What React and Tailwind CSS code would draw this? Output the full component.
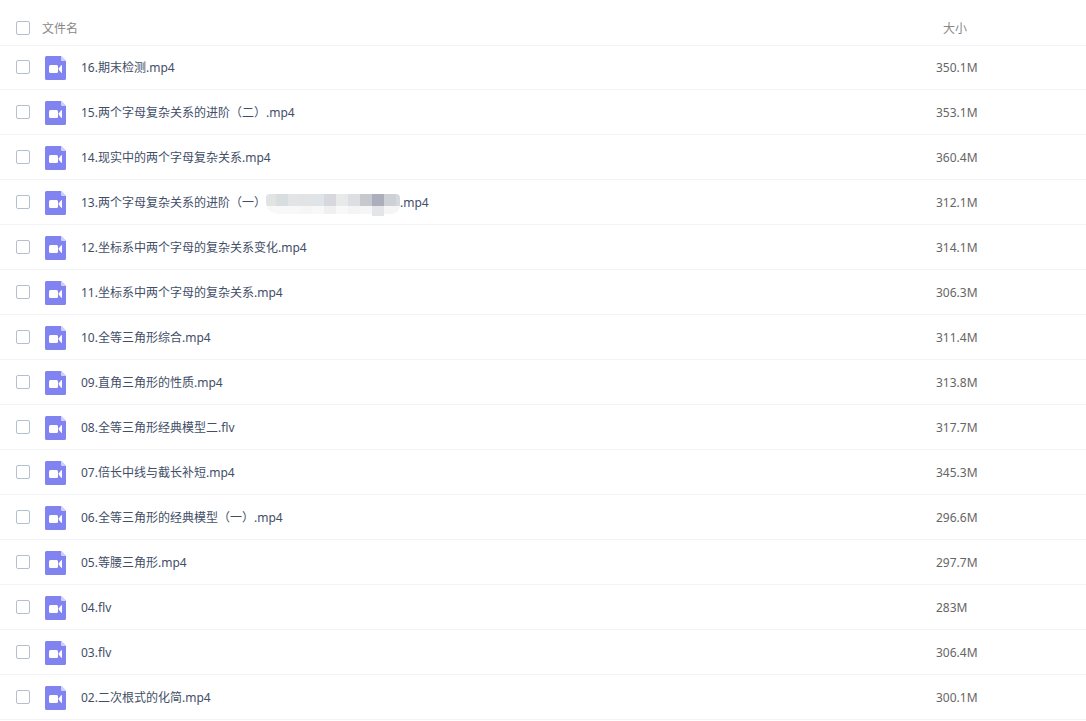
import { useState } from "react";

const FILES = [
  { id: 16, name: "16.期末检测.mp4", size: "350.1M" },
  { id: 15, name: "15.两个字母复杂关系的进阶（二）.mp4", size: "353.1M" },
  { id: 14, name: "14.现实中的两个字母复杂关系.mp4", size: "360.4M" },
  { id: 13, name: "13.两个字母复杂关系的进阶（一）", masked: true, ext: ".mp4", size: "312.1M" },
  { id: 12, name: "12.坐标系中两个字母的复杂关系变化.mp4", size: "314.1M" },
  { id: 11, name: "11.坐标系中两个字母的复杂关系.mp4", size: "306.3M" },
  { id: 10, name: "10.全等三角形综合.mp4", size: "311.4M" },
  { id: 9, name: "09.直角三角形的性质.mp4", size: "313.8M" },
  { id: 8, name: "08.全等三角形经典模型二.flv", size: "317.7M" },
  { id: 7, name: "07.倍长中线与截长补短.mp4", size: "345.3M" },
  { id: 6, name: "06.全等三角形的经典模型（一）.mp4", size: "296.6M" },
  { id: 5, name: "05.等腰三角形.mp4", size: "297.7M" },
  { id: 4, name: "04.flv", size: "283M" },
  { id: 3, name: "03.flv", size: "306.4M" },
  { id: 2, name: "02.二次根式的化简.mp4", size: "300.1M" },
];

const TOP_TILES = ["#e2e4e3", "#d8dde0", "#e2e4e6", "#e2e3e4", "#dfe4e8", "#d7d7de", "#e8eae9", "#dddee2", "#c5c8cd", "#abafbc", "#cdd0d6", "#d6d8dd"];
const BOTTOM_TILES = ["#f8f8f8", "#f8f8f8", "#f8f8f8", "#f6f6f7", "#f8f8f8", "#f0f0f1", "#f7f8f8", "#f4f4f5", "#f6f6f7", "#e4e5e9", "#f5f5f6", "#f5f5f6"];

function VideoIcon() {
  return (
    <svg width="21" height="24" viewBox="0 0 21 24" className="block shrink-0" aria-hidden="true">
      <path d="M1.5 0H16l5 5v17.5a1.5 1.5 0 0 1-1.5 1.5h-18A1.5 1.5 0 0 1 0 22.5v-21A1.5 1.5 0 0 1 1.5 0Z" fill="#8183f1" />
      <path d="M16 0l5 5h-4a1 1 0 0 1-1-1Z" fill="#cfd0fb" />
      <rect x="4" y="9" width="9" height="8" rx="1.5" fill="#fff" />
      <path d="M13.8 12.2L16 9.4q1-.8 1 .4v6.4q0 1.2-1 .4l-2.2-2.8Z" fill="#fff" />
    </svg>
  );
}

// pixelated strip hiding part of a file name
function Mosaic() {
  return (
    <svg width="134" height="22" viewBox="0 0 134 22" className="mt-[3px] -mb-px block shrink-0" aria-hidden="true">
      <clipPath id="mosaic-clip">
        <path d="M4 0H130a4 4 0 0 1 4 4v7q0 7-8 9h-8v2h-12v-2H12Q0 18 0 8V4a4 4 0 0 1 4-4Z" />
      </clipPath>
      <g clipPath="url(#mosaic-clip)" shapeRendering="crispEdges">
        {TOP_TILES.map((color, i) => (
          <rect key={i} x={i * 12 - 2} y="0" width="12" height="12" fill={color} />
        ))}
        {BOTTOM_TILES.map((color, i) => (
          <rect key={i} x={i * 12 - 2} y="12" width="12" height="10" fill={color} />
        ))}
      </g>
    </svg>
  );
}

function Checkbox(props) {
  return (
    <input
      type="checkbox"
      className="block size-3.5 shrink-0 appearance-none rounded-xs border border-[#b4c0d0] bg-white checked:border-[#8183f1] checked:bg-[#8183f1]"
      {...props}
    />
  );
}

export default function App() {
  const [selected, setSelected] = useState([]);

  const toggle = (id) => {
    setSelected((prev) => (prev.includes(id) ? prev.filter((x) => x !== id) : [...prev, id]));
  };

  const toggleAll = () => {
    setSelected(selected.length === FILES.length ? [] : FILES.map((f) => f.id));
  };

  return (
    <div className="bg-white font-['Noto_Sans','Noto_Sans_CJK_SC',sans-serif] text-xs text-[#424e67]">
      <table className="w-full table-fixed border-separate border-spacing-0 text-left">
        <thead>
          <tr className="h-[46px] text-[#888888]">
            <th className="border-b border-[#f2f4fa] p-0 pt-2.5 pl-4 font-normal">
              <div className="flex items-center gap-3">
                <Checkbox id="all" checked={selected.length === FILES.length} onChange={toggleAll} />
                <label htmlFor="all" className="pt-0.5">文件名</label>
              </div>
            </th>
            <th className="w-[150px] border-b border-[#f2f4fa] p-0 pt-3 pl-[7px] font-normal">大小</th>
          </tr>
        </thead>
        <tbody>
          {FILES.map((file) => (
            <tr key={file.id} className="h-[45px] align-bottom first:h-11">
              <td className="border-b border-[#f2f4fa] p-0 pb-[9px] pl-4">
                <div className="flex items-center">
                  <Checkbox id={`file-${file.id}`} checked={selected.includes(file.id)} onChange={() => toggle(file.id)} />
                  <div className="mr-[15px] ml-[15px] pt-0.5">
                    <VideoIcon />
                  </div>
                  <label htmlFor={`file-${file.id}`} className="flex items-center pt-0.5 whitespace-nowrap">
                    {file.name}
                    {file.masked && <Mosaic />}
                    {file.ext}
                  </label>
                </div>
              </td>
              <td className="border-b border-[#f2f4fa] p-0 pb-[13px] text-[#666666]">{file.size}</td>
            </tr>
          ))}
        </tbody>
      </table>
    </div>
  );
}
